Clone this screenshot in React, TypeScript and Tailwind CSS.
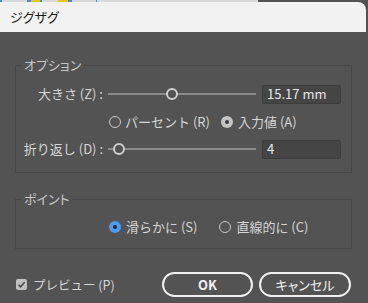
const font = "[font-family:'Noto_Sans_CJK_JP','Noto_Sans',sans-serif]";
const palt = "[font-feature-settings:'palt']";

function Slider({ pos }: { pos: number }) {
  return (
    <div className="relative h-[12px] w-[148px] flex items-center">
      <div className="h-[2px] w-full bg-[#8a8a8a]" />
      <div
        className="absolute top-0 h-[12px] w-[12px] rounded-full border-2 border-[#cfcfcf] bg-[#535353]"
        style={{ left: pos - 6 }}
      />
    </div>
  );
}

function Radio({ state }: { state: "off" | "gray" | "blue" }) {
  if (state === "blue")
    return (
      <span className="flex h-[12px] w-[12px] items-center justify-center rounded-full bg-[#4b9bf0]">
        <span className="h-[4px] w-[4px] rounded-full bg-[#2a2a2a]" />
      </span>
    );
  if (state === "gray")
    return (
      <span className="flex h-[12px] w-[12px] items-center justify-center rounded-full bg-[#c4c4c4]">
        <span className="h-[4px] w-[4px] rounded-full bg-[#3a3a3a]" />
      </span>
    );
  return <span className="h-[12px] w-[12px] rounded-full border border-[#c8c8c8]" />;
}

function Input({ value }: { value: string }) {
  return (
    <div className="flex h-[19px] w-[79px] items-center rounded-[2px] border border-[#3c3c3c] bg-[#454545] pl-[4px] text-[13px] text-[#e8e8e8]">
      {value}
    </div>
  );
}

function Label({ text }: { text: string }) {
  return (
    <div className="flex w-[79px] shrink-0 justify-end">
      <span className="shrink-0 whitespace-nowrap">{text}</span>
    </div>
  );
}

export default function App() {
  return (
    <div className={`relative h-[303px] w-[368px] overflow-hidden bg-[#535353] text-[13px] leading-[16px] text-[#d6d6d6] ${font}`}>
      <div className="flex h-[2px] w-[258px] bg-[#d9d9d9]">
        <div className="w-[2px] bg-[#4a86e8]" />
        <div className="w-[25px]" />
        <div className="w-[4px] bg-[#4a86e8]" />
        <div className="w-[9px] bg-[#e6c619]" />
        <div className="w-[2px] bg-[#4a86e8]" />
        <div className="w-[16px]" />
        <div className="w-[10px] bg-[#e6c619]" />
        <div className="w-[4px] bg-[#4a86e8]" />
        <div className="w-[24px]" />
        <div className="w-[1px] bg-[#4a86e8]" />
      </div>

      <div className="w-[366px]">
        <div className={`flex h-[30px] items-center rounded-tr-[8px] bg-[#f2f2f2] pl-[10px] text-[13px] text-[#1a1a1a] ${palt}`}>
          ジグザグ
        </div>

        <div className="px-[15px]">
          <fieldset className="mt-[25px] w-[337px] border border-[#474747] px-[8px] pb-[13px]">
            <legend className={`ml-[-2px] px-[2px] leading-[16px] text-[#c8c8c8] ${palt}`}>オプション</legend>

            <div className="mt-[11px] flex h-[20px] items-center">
              <Label text="大きさ (Z) :" />
              <div className="ml-[5px]">
                <Slider pos={64} />
              </div>
              <div className="ml-[6px]">
                <Input value="15.17 mm" />
              </div>
            </div>

            <div className="mt-[10px] flex h-[16px] items-center">
              <div className="ml-[85px] flex items-center gap-[4px]">
                <Radio state="off" />
                <span>パーセント (R)</span>
              </div>
              <div className="ml-[11px] flex items-center gap-[5px]">
                <Radio state="gray" />
                <span>入力値 (A)</span>
              </div>
            </div>

            <div className="mt-[9px] flex h-[20px] items-center">
              <Label text="折り返し (D) :" />
              <div className="ml-[5px]">
                <Slider pos={11} />
              </div>
              <div className="ml-[6px]">
                <Input value="4" />
              </div>
            </div>
          </fieldset>

          <fieldset className="mt-[18px] h-[58px] w-[337px] border border-[#474747] px-[8px]">
            <legend className={`ml-[-2px] px-[2px] leading-[16px] text-[#c8c8c8] ${palt}`}>ポイント</legend>
            <div className="mt-[12px] flex h-[16px] items-center">
              <div className="ml-[85px] flex items-center gap-[5px]">
                <Radio state="blue" />
                <span>滑らかに (S)</span>
              </div>
              <div className="ml-[22px] flex items-center gap-[5px]">
                <Radio state="off" />
                <span>直線的に (C)</span>
              </div>
            </div>
          </fieldset>
        </div>

        <div className="mt-[23px] flex items-center pl-[16px] pr-[15px]">
          <div className="flex items-center gap-[6px]">
            <span className="flex h-[11px] w-[11px] items-center justify-center rounded-[2px] bg-[#c0c0c0]">
              <svg width="9" height="9" viewBox="0 0 9 9">
                <path d="M1.5 4.8 L3.6 6.8 L7.6 2.2" fill="none" stroke="#4a4a4a" strokeWidth="1.6" />
              </svg>
            </span>
            <span className="text-[12.5px]">プレビュー (P)</span>
          </div>
          <div className={`ml-auto flex gap-[6px] ${palt}`}>
            <button className="flex h-[25px] w-[91px] items-center justify-center rounded-full border-2 border-[#f0f0f0] font-semibold text-[#f0f0f0]">
              OK
            </button>
            <button className="flex h-[25px] w-[92px] items-center justify-center rounded-full border-2 border-[#f0f0f0] text-[#f0f0f0]">
              キャンセル
            </button>
          </div>
        </div>
      </div>
    </div>
  );
}
